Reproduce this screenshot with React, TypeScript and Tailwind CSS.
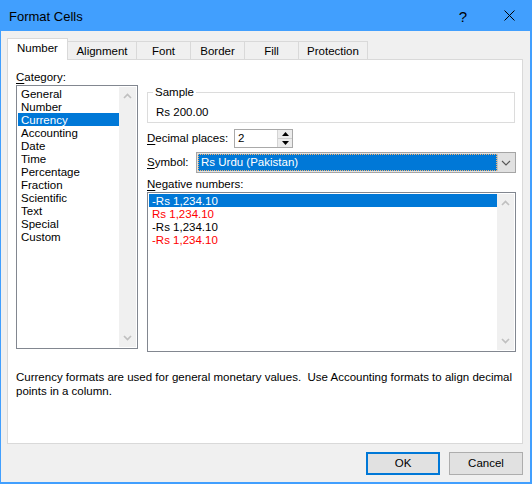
import React from 'react'

const categories = ['General', 'Number', 'Currency', 'Accounting', 'Date', 'Time', 'Percentage', 'Fraction', 'Scientific', 'Text', 'Special', 'Custom']

const negatives = [
  { text: '-Rs 1,234.10', red: false },
  { text: 'Rs 1,234.10', red: true },
  { text: '-Rs 1,234.10', red: false },
  { text: '-Rs 1,234.10', red: true },
]

const tabs = [
  { label: 'Alignment', cls: 'w-[69px]' },
  { label: 'Font', cls: 'w-[54px]' },
  { label: 'Border', cls: 'w-[54px]' },
  { label: 'Fill', cls: 'w-[54px]' },
  { label: 'Protection', cls: 'w-[69px]' },
]

function ScrollChevron({ up }: { up?: boolean }) {
  return (
    <svg width="9" height="6" viewBox="0 0 9 6" className="text-[#c0c0c0]">
      <path d={up ? 'M1 5 L4.5 1.5 L8 5' : 'M1 1 L4.5 4.5 L8 1'} fill="none" stroke="currentColor" strokeWidth={1.7} />
    </svg>
  )
}

function ScrollBar() {
  return (
    <div className="w-[17px] bg-[#f0f0f0] flex flex-col justify-between items-center py-[6px]">
      <ScrollChevron up />
      <ScrollChevron />
    </div>
  )
}

function Underlined({ first, rest }: { first: string; rest: string }) {
  return (
    <span>
      <span className="underline underline-offset-[2px]">{first}</span>
      {rest}
    </span>
  )
}

export default function App() {
  return (
    <div className="w-[532px] h-[484px] flex flex-col bg-[#f0f0f0] text-[11.5px] leading-[13px] text-black font-['Liberation_Sans',Arial,sans-serif]">
      {/* title bar */}
      <div className="h-[31px] bg-[#419ffe] flex items-center shrink-0">
        <span className="pl-[9px] pt-[2px] text-[13px] flex-1">Format Cells</span>
        <div className="w-[46px] h-full flex items-center justify-center pt-[1px] text-[15px]">?</div>
        <div className="w-[46px] h-full flex items-center justify-center">
          <svg width="11" height="11" viewBox="0 0 11 11">
            <path d="M0.5 0.5 L10.5 10.5 M10.5 0.5 L0.5 10.5" stroke="#000" strokeWidth={1} />
          </svg>
        </div>
      </div>

      <div className="flex-1 flex flex-col border-l border-r-2 border-b-2 border-[#419ffe] pl-[6px] pr-[7px]">
        {/* tabs */}
        <div className="flex items-end pt-[7px] h-[28px] relative z-10">
          <div className="w-[61px] h-[22px] -mb-px bg-white border border-b-0 border-[#d9d9d9] flex justify-center pt-[3px]">
            Number
          </div>
          {tabs.map(t => (
            <div key={t.label} className={`${t.cls} h-[18px] border-t border-r border-[#d9d9d9] flex justify-center pt-[3px]`}>
              {t.label}
            </div>
          ))}
        </div>

        {/* panel */}
        <div className="h-[385px] bg-white border border-[#d9d9d9] pl-[8px] pt-[10px] flex flex-col">
          <div className="flex items-start">
            {/* category */}
            <div className="w-[122px] flex flex-col">
              <div className="h-[13px] leading-[14px]"><Underlined first="C" rest="ategory:" /></div>
              <div className="mt-[2px] h-[264px] border border-[#828790] p-px flex">
                <div className="flex-1 flex flex-col">
                  {categories.map(c => (
                    <div key={c} className={`h-[13px] leading-[14px] pl-[3px] ${c === 'Currency' ? 'bg-[#0078d7] text-white' : ''}`}>{c}</div>
                  ))}
                </div>
                <ScrollBar />
              </div>
            </div>

            {/* right column */}
            <div className="ml-[9px] w-[369px] mt-[16px] flex flex-col">
              <fieldset className="w-[368px] h-[37px] border border-[#dcdcdc] pl-[8px]">
                <legend className="ml-[-3px] px-[2px] h-[13px]">Sample</legend>
                <div className="mt-[6px] leading-[14px]">Rs 200.00</div>
              </fieldset>

              <div className="mt-[6px] flex items-center">
                <div className="w-[87px]"><Underlined first="D" rest="ecimal places:" /></div>
                <div className="w-[59px] h-[19px] border border-[#a9a9a9] bg-white flex">
                  <div className="flex-1 pl-[3px] flex items-center">2</div>
                  <div className="w-[15px] flex flex-col border-l border-[#d4d4d4]">
                    <div className="flex-1 bg-[#ececec] border-b border-[#cfcfcf] flex items-center justify-center">
                      <svg width="7" height="4" viewBox="0 0 7 4"><path d="M0 4 L3.5 0 L7 4 Z" fill="#000" /></svg>
                    </div>
                    <div className="flex-1 bg-[#ececec] flex items-center justify-center">
                      <svg width="7" height="4" viewBox="0 0 7 4"><path d="M0 0 L3.5 4 L7 0 Z" fill="#000" /></svg>
                    </div>
                  </div>
                </div>
              </div>

              <div className="mt-[4px] flex items-center">
                <div className="w-[49px]"><Underlined first="S" rest="ymbol:" /></div>
                <div className="flex-1 h-[21px] border border-[#a5a5a5] bg-[#e1e1e1] flex p-px">
                  <div className="flex-1 bg-[#0078d7] text-white border border-dotted border-[#f5b26b] flex items-center pl-[2px]">
                    Rs Urdu (Pakistan)
                  </div>
                  <div className="w-[17px] flex items-center justify-center border-l border-[#c4c4c4]">
                    <svg width="10" height="6" viewBox="0 0 10 6">
                      <path d="M1 1 L5 5 L9 1" fill="none" stroke="#555" strokeWidth={1.1} />
                    </svg>
                  </div>
                </div>
              </div>

              <div className="mt-[4px] h-[13px] leading-[14px]"><Underlined first="N" rest="egative numbers:" /></div>
              <div className="mt-[2px] h-[160px] border border-[#828790] p-px flex">
                <div className="flex-1 flex flex-col">
                  {negatives.map((n, i) => (
                    <div
                      key={i}
                      className={`h-[13px] leading-[14px] pl-[3px] ${i === 0 ? 'bg-[#0078d7] text-white' : n.red ? 'text-[#ff0000]' : ''}`}
                    >
                      {n.text}
                    </div>
                  ))}
                </div>
                <ScrollBar />
              </div>
            </div>
          </div>

          <p className="mt-[18px] leading-[14px] pr-[2px]">
            Currency formats are used for general monetary values.&nbsp; Use Accounting formats to align decimal points in a column.
          </p>
        </div>

        {/* buttons */}
        <div className="mt-[8px] flex justify-end gap-[9px]">
          <button className="w-[74px] h-[23px] bg-[#e1e1e1] border-2 border-[#0078d7]">OK</button>
          <button className="w-[74px] h-[23px] bg-[#e1e1e1] border border-[#adadad]">Cancel</button>
        </div>
      </div>
    </div>
  )
}
